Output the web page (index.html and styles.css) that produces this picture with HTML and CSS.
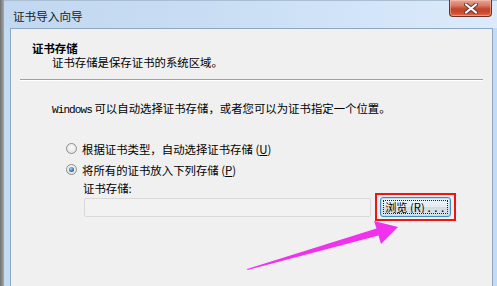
FILE: index.html
```html
<!DOCTYPE html>
<html>
<head>
  <meta charset="UTF-8">
  <title>证书导入向导</title>
  <link rel="stylesheet" href="styles.css">
</head>
<body>
  <div class="window">
    <div class="titlebar">
      <span class="title">证书导入向导</span>
      <span class="close">
        <svg width="14" height="11" viewBox="0 0 14 11">
          <path d="M2 1.5 L12 9.5 M12 1.5 L2 9.5" stroke="#5a3a36" stroke-width="4" stroke-linecap="round"/>
          <path d="M2 1.5 L12 9.5 M12 1.5 L2 9.5" stroke="#ffffff" stroke-width="2.2" stroke-linecap="round"/>
        </svg>
      </span>
    </div>

    <div class="frame">
      <div class="client">
        <div class="header">
          <div class="heading">证书存储</div>
          <div class="subheading">证书存储是保存证书的系统区域。</div>
        </div>
        <div class="etch"></div>

        <div class="content">
          <p class="intro"><span class="mono">Windows</span> 可以自动选择证书存储，或者您可以为证书指定一个位置。</p>

          <div class="options">
            <div class="option"><span class="radio"></span><span>根据证书类型，自动选择证书存储 (<u>U</u>)</span></div>
            <div class="option"><span class="radio checked"></span><span>将所有的证书放入下列存储 (<u>P</u>)</span></div>
          </div>

          <div class="store">
            <div class="store-label">证书存储:</div>
            <div class="store-row">
              <div class="field"></div>
              <div class="highlight">
                <div class="btn"><div class="focus">浏览 (<u>R</u>)<span class="dots">...</span></div></div>
              </div>
            </div>
          </div>
        </div>
      </div>
    </div>

    <svg class="arrow" width="497" height="286" viewBox="0 0 497 286">
      <polygon points="247,269 376.5,228.5 374,221 398,227 381,244 378.5,235.5 247.5,270" fill="#f032ef"/>
    </svg>
  </div>
</body>
</html>
```

FILE: styles.css
```css
body {
  margin: 0;
  font-family: "Noto Sans CJK SC", sans-serif;
  font-size: 11.4px;
  color: #000;
}
.window {
  position: relative;
  width: 497px;
  height: 286px;
  box-sizing: border-box;
  padding-left: 4px;
  display: flex;
  flex-direction: column;
  overflow: hidden;
  background: linear-gradient(90deg, #6f6f6f, #a8a8a8) left top / 4px 100% no-repeat, #c3dcf6;
}
.titlebar {
  height: 28px;
  display: flex;
  justify-content: space-between;
  align-items: flex-start;
  padding-left: 9px;
  background: linear-gradient(90deg, #c2d8f0 0%, #c8ddf3 40%, #d3e5f8 75%, #dcebfb 100%);
  border-top: 1px solid #a9bdd3;
  box-sizing: border-box;
}
.title {
  margin-top: 8px;
  line-height: 14px;
  font-size: 11.6px;
  color: #1a1a1a;
}
.close {
  width: 43px;
  height: 17px;
  margin: -1px 5px 0 0;
  box-sizing: border-box;
  border: 1px solid #6e3128;
  border-top: none;
  border-radius: 0 0 4px 4px;
  background: linear-gradient(#e6a595 0%, #d77a63 35%, #c5462b 55%, #c9472b 75%, #db6a4c 100%);
  box-shadow: inset 0 0 0 1px rgba(255, 210, 200, 0.45);
  display: flex;
  align-items: center;
  justify-content: center;
}
.frame {
  flex: 1;
  display: flex;
  padding: 0 4px 0 6px;
  background: #c3dcf6;
}
.client {
  flex: 1;
  border: 1px solid #8ea6bf;
  border-bottom: none;
  background: #f0f0f0;
}
.header {
  padding: 12px 0 10px 21px;
  line-height: 14px;
}
.heading {
  font-weight: bold;
}
.subheading {
  padding-left: 20px;
}
.etch {
  margin: 0 9px;
  border-top: 1px solid #a0a0a0;
  border-bottom: 1px solid #ffffff;
}
.content {
  padding-left: 41px;
}
.intro {
  margin: 21px 0 0;
  line-height: 13px;
}
.mono {
  font-family: "Liberation Mono", monospace;
  font-size: 11px;
  letter-spacing: -0.9px;
}
.options {
  margin: 21px 0 0 14px;
}
.option {
  height: 21px;
  display: flex;
  align-items: center;
}
.radio {
  width: 11px;
  height: 11px;
  box-sizing: border-box;
  margin-right: 5px;
  border: 1px solid #8d8d8d;
  border-radius: 50%;
  background: radial-gradient(circle at 50% 40%, #fbfbfb, #dcdcdc);
  display: flex;
  align-items: center;
  justify-content: center;
}
.radio.checked::after {
  content: "";
  width: 5px;
  height: 5px;
  border-radius: 50%;
  background: radial-gradient(circle at 40% 35%, #9fd4f7, #1c5fa8 70%);
}
.store {
  margin: 2px 0 0 31px;
}
.store-label {
  line-height: 13px;
}
.store-row {
  margin-top: 2px;
  display: flex;
  align-items: flex-start;
}
.field {
  width: 287px;
  height: 19px;
  box-sizing: border-box;
  margin: 1px 0 0 1px;
  border: 1px solid #d9d9d9;
  border-radius: 2px;
  background: #f2f2f2;
}
.highlight {
  margin: -4px 0 0 4px;
  padding: 2px 3px;
  border: 2px solid #f01414;
}
.btn {
  width: 71px;
  height: 20px;
  box-sizing: border-box;
  border: 1px solid #3d8dc2;
  border-radius: 3px;
  background: linear-gradient(#eef4f8 0%, #e4ecf1 48%, #d2dde4 52%, #d9e3e9 100%);
  box-shadow: inset 0 0 0 1px #b5e0f7;
  padding: 2px;
}
.focus {
  height: 100%;
  box-sizing: border-box;
  border: 1px dotted #222;
  line-height: 12px;
  font-size: 11.2px;
  text-align: center;
  white-space: nowrap;
  overflow: hidden;
}
.dots {
  font-family: "Liberation Mono", monospace;
  margin-left: 1px;
}
.arrow {
  position: absolute;
  left: 0;
  top: 0;
  pointer-events: none;
}
```
